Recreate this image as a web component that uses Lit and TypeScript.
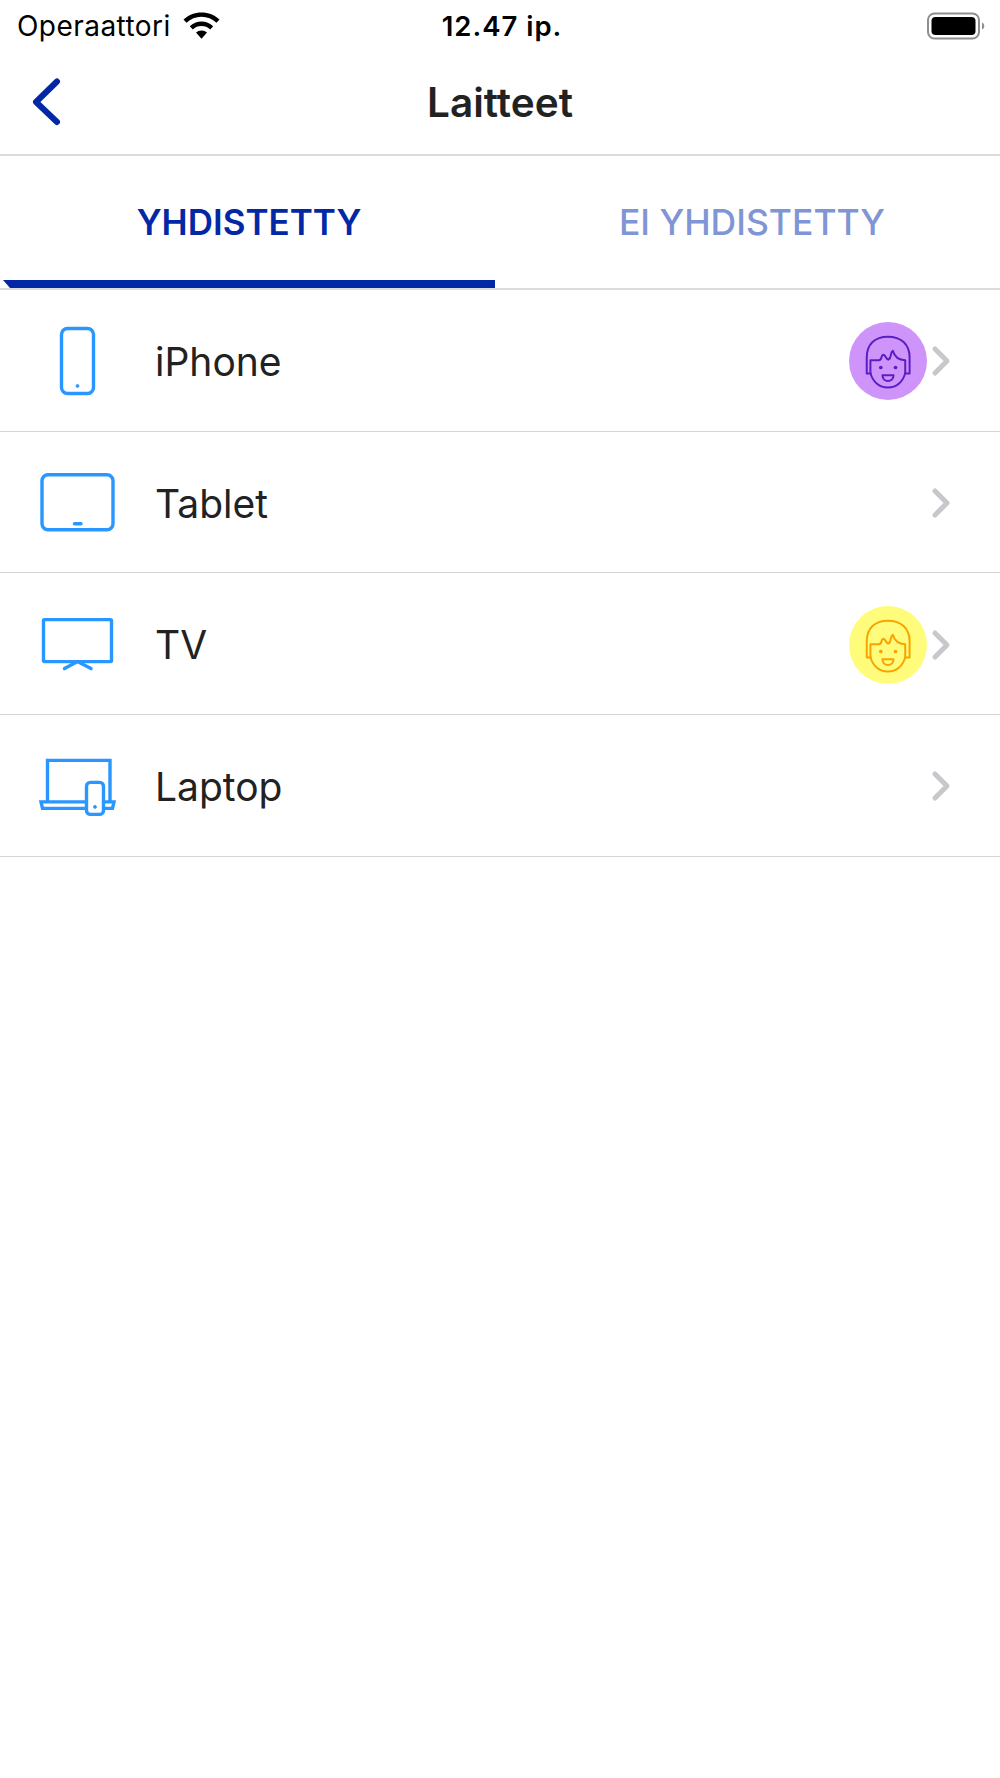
import { LitElement, html, css, svg } from "lit";
import { customElement } from "lit/decorators.js";

const face = (stroke: string) => svg`
  <g fill="none" stroke=${stroke} stroke-width="6" stroke-linejoin="round" stroke-linecap="round">
    <path d="M122 190H110V142C110 102 135 80 173 80C212 80 238 102 238 142V190H225"/>
    <path d="M121 150V188C127 214 148 232 173 232C199 232 219 214 225 188V150C205 150 193 140 188 122C178 128 186 142 175 148C168 150 168 136 160 134C150 136 158 150 146 150Z"/>
    <path d="M157 195H190C190 206 182 212 173 212C165 212 157 206 157 195Z"/>
  </g>
  <circle cx="152" cy="172" r="5.5" fill=${stroke}/><circle cx="196" cy="172" r="5.5" fill=${stroke}/>`;

const icons: Record<string, unknown> = {
  phone: svg`<rect x="61.5" y="328.5" width="32" height="65" rx="6"/><circle cx="77.5" cy="386" r="1.4" class="solid"/>`,
  tablet: svg`<rect x="42" y="474.5" width="71" height="55" rx="6"/><path d="M74.5 523.5H81" stroke-linecap="round"/>`,
  tv: svg`<rect x="43.5" y="620" width="68" height="42" rx="1"/><path d="M64.5 669L77.5 662L91 669" stroke-linecap="round"/>`,
  laptop: svg`<path d="M47.5 802V760.5H110V802"/><path d="M86 802H41L42.5 808.5H86M104 802H114L112.5 808.5H104"/><rect x="86.5" y="782.5" width="17" height="32" rx="4"/><circle cx="95" cy="807" r="1.4" class="solid"/>`,
};

const rows: { name: string; icon: string; y: number; bg?: string; stroke?: string }[] = [
  { name: "iPhone", icon: "phone", y: 290, bg: "#cf94f9", stroke: "#5a1fc4" },
  { name: "Tablet", icon: "tablet", y: 431.7 },
  { name: "TV", icon: "tv", y: 573.4, bg: "#fffc7c", stroke: "#f7a400" },
  { name: "Laptop", icon: "laptop", y: 715.1 },
];

@customElement("app-root")
export class AppRoot extends LitElement {
  static styles = css`
    :host { display: block; width: 1000px; height: 1778px; background: #fff; font-family: Inter, "Liberation Sans", sans-serif; color: #222; }
    .status { height: 51px; padding: 0 13px 2px 17px; display: grid; grid-template-columns: 1fr auto 1fr; align-items: center; font-size: 28px; color: #000; }
    .left { display: flex; align-items: center; gap: 12px; }
    .carrier { letter-spacing: 0.45px; }
    .time { font-weight: 600; font-size: 27.5px; letter-spacing: 1px; }
    .right { display: flex; justify-content: flex-end; }
    .nav { height: 101px; display: flex; align-items: center; justify-content: center; position: relative; border-bottom: 2px solid #dcdcdc; }
    .back { position: absolute; left: 30px; top: 23px; }
    .title { font-size: 40.5px; font-weight: 600; color: #222; padding-bottom: 3px; }
    .tabs { height: 124px; display: flex; }
    .tab { flex: 0 0 498px; display: flex; align-items: center; justify-content: center; font-size: 35px; font-weight: 600; padding-top: 8px; color: #0328a6; }
    .tab.off { flex: 1; color: #8095d5; font-weight: 500; padding-left: 6px; font-size: 35.5px; }
    .track { height: 8px; border-bottom: 2px solid #dcdcdc; box-sizing: content-box; }
    .bar { width: 492px; height: 8px; margin-left: 3px; background: #0328a6; clip-path: polygon(0 0, 100% 0, 100% 100%, 7px 100%); }
    .row { height: 140.7px; border-bottom: 1px solid #d4d4d4; display: flex; align-items: center; padding-right: 49px; }
    .slot { width: 155px; align-self: stretch; flex: none; }
    .slot svg { display: block; }
    .slot .glyph { fill: none; stroke: #2a96ff; stroke-width: 3.4; }
    .slot .solid { fill: #2a96ff; stroke-width: 1; }
    .name { font-size: 39px; flex: 1; color: #222; padding-top: 2px; }
    .avatar { width: 78px; height: 78px; border-radius: 50%; margin: 2px 4px 0 0; }
    .avatar svg { display: block; }
    .chev { display: block; margin-top: 2px; }
  `;

  private renderIcon(r: (typeof rows)[number]) {
    return html`<svg width="155" height="141" viewBox="0 ${r.y} 155 141"><g class="glyph">${icons[r.icon]}</g></svg>`;
  }

  render() {
    return html`
      <div class="status">
        <div class="left">
          <span class="carrier">Operaattori</span>
          <svg width="37" height="28" viewBox="0 0 37 28" fill="#000">
            <path d="M18.5 0.5C11.5 0.5 5.5 3 0.5 7.5L3.5 10.8C7.6 7 12.8 4.8 18.5 4.8C24.2 4.8 29.4 7 33.5 10.8L36.5 7.5C31.5 3 25.5 0.5 18.5 0.5Z"/>
            <path d="M18.5 9.5C14 9.5 10 11.2 6.8 14.2L9.8 17.4C12.1 15.2 15.1 14 18.5 14C21.9 14 24.9 15.2 27.2 17.4L30.2 14.2C27 11.2 23 9.5 18.5 9.5Z"/>
            <path d="M18.5 18.5C16.4 18.5 14.5 19.3 13 20.6L18.5 26.8L24 20.6C22.5 19.3 20.6 18.5 18.5 18.5Z"/>
          </svg>
        </div>
        <span class="time">12.47 ip.</span>
        <div class="right">
          <svg width="60" height="28" viewBox="0 0 60 28">
            <rect x="1" y="1.5" width="51" height="25" rx="6.5" fill="none" stroke="#8e8e8e" stroke-width="2"/>
            <rect x="4.5" y="5" width="44" height="18" rx="4" fill="#000"/>
            <path d="M55 10.5C58 11.5 58 16.5 55 17.5Z" fill="#8e8e8e"/>
          </svg>
        </div>
      </div>
      <div class="nav">
        <svg class="back" width="32" height="50" viewBox="0 0 32 50" fill="none" stroke="#0328a6" stroke-width="6" stroke-linecap="round" stroke-linejoin="round">
          <path d="M27 5.5L6 26L27 46"/>
        </svg>
        <span class="title">Laitteet</span>
      </div>
      <div class="tabs">
        <div class="tab">YHDISTETTY</div>
        <div class="tab off">EI YHDISTETTY</div>
      </div>
      <div class="track"><div class="bar"></div></div>
      ${rows.map(
        (r) => html`
          <div class="row">
            <div class="slot">${this.renderIcon(r)}</div>
            <span class="name">${r.name}</span>
            ${r.bg
              ? html`<div class="avatar" style="background:${r.bg}">
                  <svg width="78" height="78" viewBox="57 36 233 233">${face(r.stroke!)}</svg>
                </div>`
              : ""}
            <svg class="chev" width="20" height="32" viewBox="0 0 20 32" fill="none" stroke="#c7c7cc" stroke-width="5" stroke-linecap="round" stroke-linejoin="round">
              <path d="M4 4L16 16L4 28"/>
            </svg>
          </div>
        `
      )}
    `;
  }
}
